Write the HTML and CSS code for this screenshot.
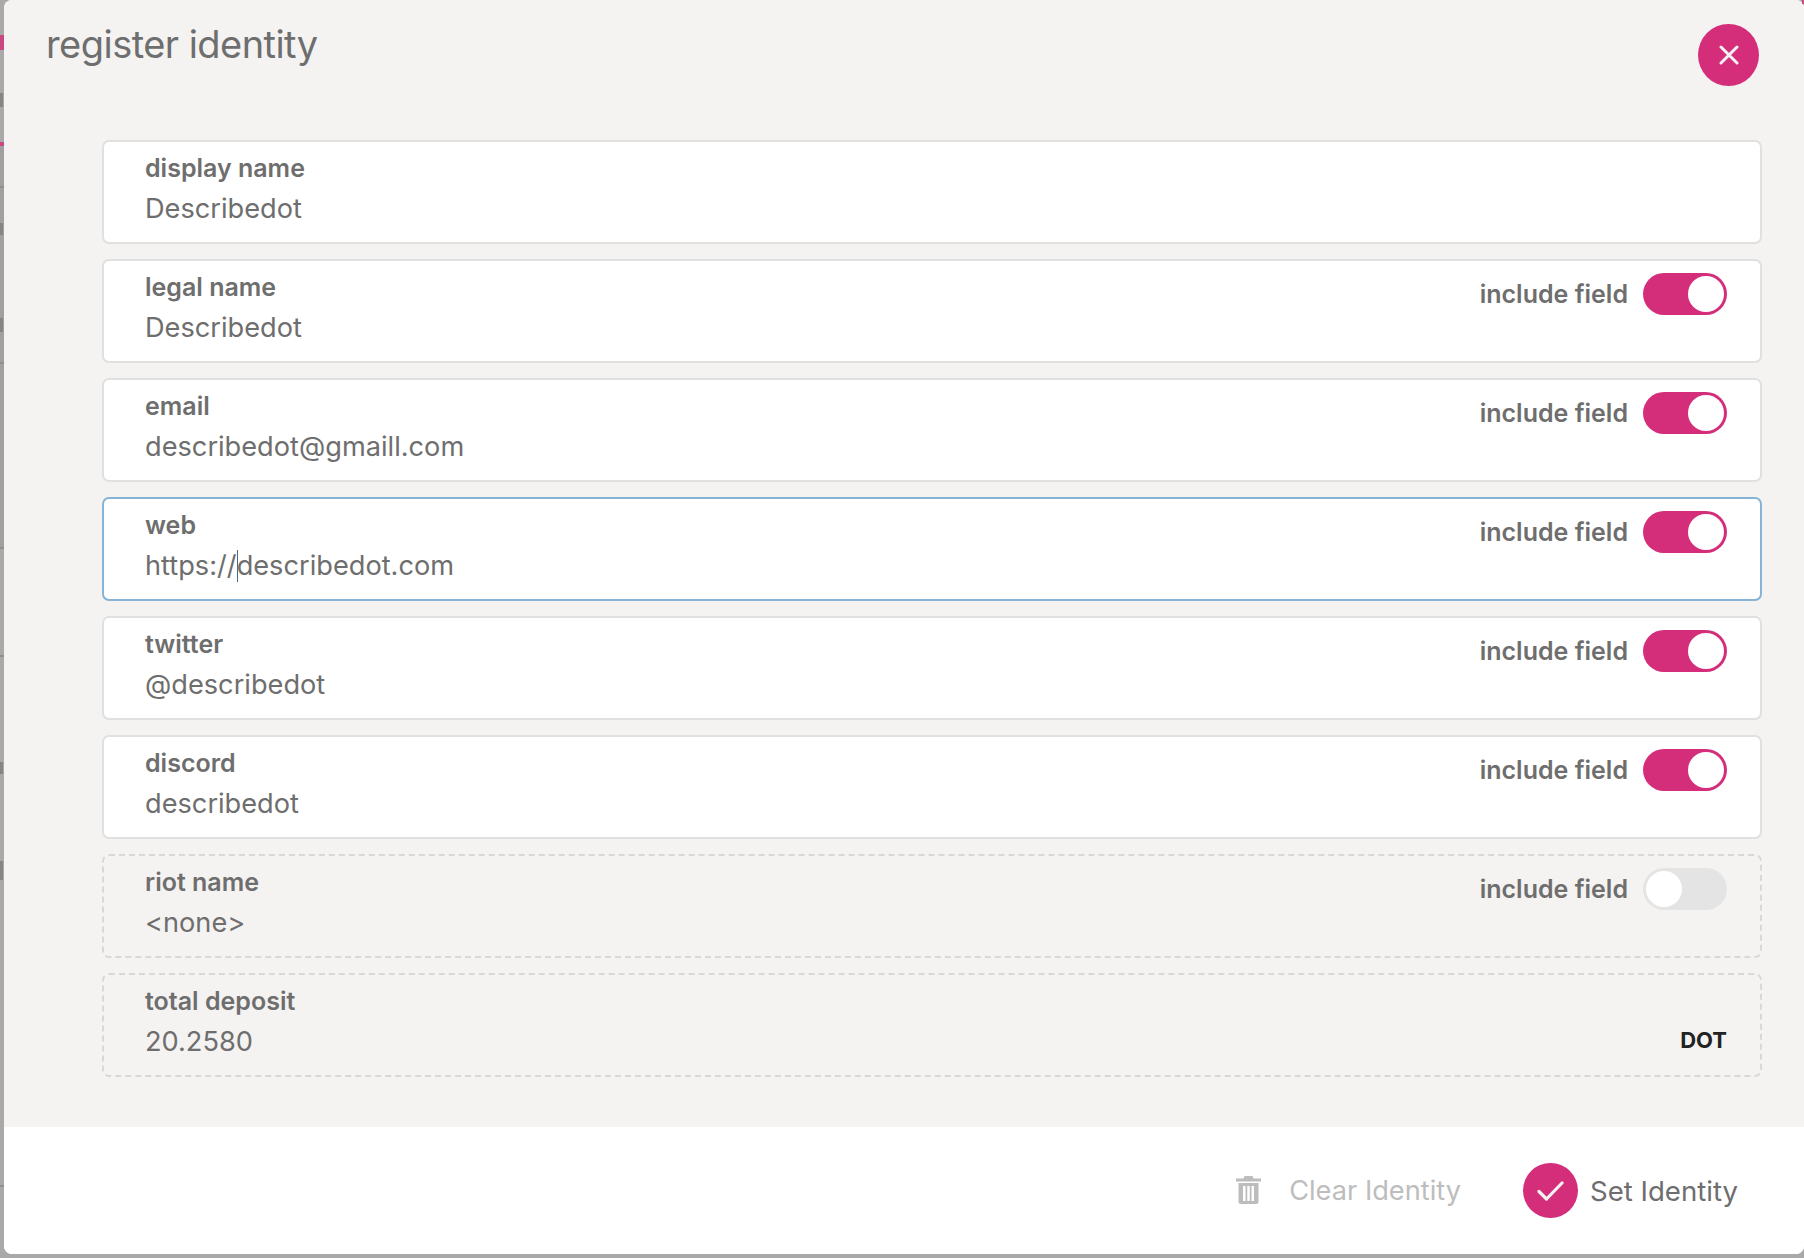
FILE: index.html
```html
<!DOCTYPE html>
<html lang="en">
<head>
<meta charset="utf-8">
<title>register identity</title>
<link rel="stylesheet" href="styles.css">
</head>
<body>
<div class="backdrop">
  <i class="mark pink m-35"></i><i class="mark dark m-93"></i><i class="mark pink m-142"></i>
  <i class="mark line m-186"></i><i class="mark dark m-222"></i><i class="mark dark m-318"></i>
  <i class="mark line m-362"></i><i class="mark line m-547"></i><i class="mark line m-655"></i>
  <i class="mark dark m-760"></i><i class="mark dark m-860"></i><i class="mark line m-1185"></i>
  <i class="dither"></i>
  <main class="modal">
    <section class="content">
      <header class="head">
        <h1 class="title">register identity</h1>
        <button class="close" aria-label="close">
          <svg width="20" height="20" viewBox="0 0 20 20"><path d="M2 2L18 18M18 2L2 18" stroke="#f4f1f2" stroke-width="3" stroke-linecap="round" fill="none"/></svg>
        </button>
      </header>
      <div class="fields">
        <div class="field">
          <div class="text"><span class="label">display name</span><span class="value">Describedot</span></div>
        </div>
        <div class="field">
          <div class="text"><span class="label">legal name</span><span class="value">Describedot</span></div>
          <div class="include"><span>include field</span><span class="toggle on"><b></b></span></div>
        </div>
        <div class="field">
          <div class="text"><span class="label">email</span><span class="value">describedot@gmaill.com</span></div>
          <div class="include"><span>include field</span><span class="toggle on"><b></b></span></div>
        </div>
        <div class="field focused">
          <div class="text"><span class="label">web</span><span class="value">https://<span class="caret"></span>describedot.com</span></div>
          <div class="include"><span>include field</span><span class="toggle on"><b></b></span></div>
        </div>
        <div class="field">
          <div class="text"><span class="label">twitter</span><span class="value">@describedot</span></div>
          <div class="include"><span>include field</span><span class="toggle on"><b></b></span></div>
        </div>
        <div class="field">
          <div class="text"><span class="label">discord</span><span class="value">describedot</span></div>
          <div class="include"><span>include field</span><span class="toggle on"><b></b></span></div>
        </div>
        <div class="field static">
          <div class="text"><span class="label">riot name</span><span class="value">&lt;none&gt;</span></div>
          <div class="include"><span>include field</span><span class="toggle"><b></b></span></div>
        </div>
        <div class="field static">
          <div class="text"><span class="label">total deposit</span><span class="value">20.2580</span></div>
          <div class="unit">DOT</div>
        </div>
      </div>
    </section>
    <footer class="actions">
      <div class="action disabled">
        <svg class="trash" width="25" height="28" viewBox="0 0 25 28"><path fill="#bdbdbd" fill-rule="evenodd" d="M8.500 0h8l1 2.500H25v3H0v-3h7.500zM2.500 7h20v18.500a2.500 2.500 0 0 1-2.500 2.500H5a2.500 2.500 0 0 1-2.500-2.500zM7 10v15h2.500V10zm4.250 0v15h2.500V10zm4.250 0v15H18V10z"/></svg>
        <span>Clear Identity</span>
      </div>
      <div class="action primary">
        <span class="check"><svg width="27" height="20" viewBox="0 0 27 20"><path d="M2 10.500L9.500 18L25 2" stroke="#f4f1f2" stroke-width="3.200" stroke-linecap="round" stroke-linejoin="round" fill="none"/></svg></span>
        <span>Set Identity</span>
      </div>
    </footer>
  </main>
  <i class="corner"></i>
</div>
</body>
</html>
```
FILE: styles.css
```css
* { box-sizing: border-box; }
html, body { margin: 0; padding: 0; }
body { width: 1804px; height: 1258px; overflow: hidden; font-family: Inter, "Liberation Sans", sans-serif; color: #6e6e6e; }
.backdrop { position: relative; width: 1804px; height: 1258px; background: #a9a9a9; padding: 0 0 4px 4px; }
.dither { position: absolute; left: 0; top: 146px; width: 4px; height: 401px; background: #a0a0a0; }
.corner { position: absolute; right: 0; top: 0; width: 2px; height: 4px; background: #c9487f; }
.mark { position: absolute; left: 0; width: 4px; z-index: 1; }
.pink { background: #c9487f; }
.dark { background: #858585; width: 3px; }
.line { background: #8f8f8f; height: 2px; }
.m-35 { top: 35px; height: 15px; }
.m-93 { top: 93px; height: 14px; }
.m-142 { top: 142px; height: 4px; }
.m-186 { top: 186px; }
.m-222 { top: 223px; height: 12px; }
.m-318 { top: 318px; height: 14px; }
.m-362 { top: 362px; }
.m-547 { top: 547px; }
.m-655 { top: 655px; }
.m-760 { top: 762px; height: 12px; }
.m-860 { top: 861px; height: 19px; }
.m-1185 { top: 1185px; }
.modal { position: relative; display: flex; flex-direction: column; height: 100%; border-radius: 8px; overflow: hidden; background: #fff; }
.content { flex: 1; background: #f4f3f2; }
.head { display: flex; justify-content: space-between; align-items: flex-start; height: 140px; padding: 24px 45px 0 42px; }
.title { margin: 0; font-size: 38px; font-weight: 400; line-height: 40px; letter-spacing: -0.55px; color: #6e6e6e; }
.close { width: 61px; height: 62px; border: 0; border-radius: 50%; padding: 0; background: #d42e7b; display: flex; align-items: center; justify-content: center; }
.fields { display: flex; flex-direction: column; gap: 15px; padding: 0 42px 0 98px; }
.field { height: 104px; display: flex; justify-content: space-between; align-items: flex-start; background: #fff; border: 2px solid #e0e0e0; border-radius: 7px; padding: 11px 33px 0 41px; }
.field.focused { border-color: #85b4d6; }
.field.static { background: transparent; border: 2px dashed #d8d8d8; }
.text { display: flex; flex-direction: column; }
.label { font-size: 25px; font-weight: 600; line-height: 30px; color: #6e6e6e; }
.value { font-size: 27.200px; font-weight: 400; line-height: 34px; margin-top: 9px; color: #6e6e6e; }
.caret { display: inline-block; width: 1.500px; height: 32px; background: #4a6a8a; vertical-align: -7px; margin-right: -1.500px; }
.include { display: flex; align-items: center; gap: 15px; font-size: 25px; font-weight: 600; line-height: 42px; color: #6e6e6e; margin-top: 1px; }
.toggle { display: flex; width: 84px; height: 42px; border-radius: 21px; background: #d42e7b; padding: 3px; justify-content: flex-end; }
.toggle b { width: 36px; height: 36px; border-radius: 50%; background: #fff; }
.toggle:not(.on) { justify-content: flex-start; background: #e4e4e4; }
.unit { align-self: flex-end; margin-bottom: 20px; font-size: 22px; font-weight: 700; line-height: 30px; color: #222; }
.actions { height: 127px; display: flex; align-items: center; justify-content: flex-end; gap: 62px; padding-right: 66px; background: #fff; }
.action { display: flex; align-items: center; }
.disabled { color: #bdbdbd; gap: 28px; font-size: 27.200px; line-height: 34px; padding-top: 1px; }
.trash { margin-top: -3px; }
.primary { gap: 12px; color: #6e6e6e; font-size: 27.600px; }
.check { width: 55px; height: 55px; border-radius: 50%; background: #d42e7b; display: flex; align-items: center; justify-content: center; }
```
